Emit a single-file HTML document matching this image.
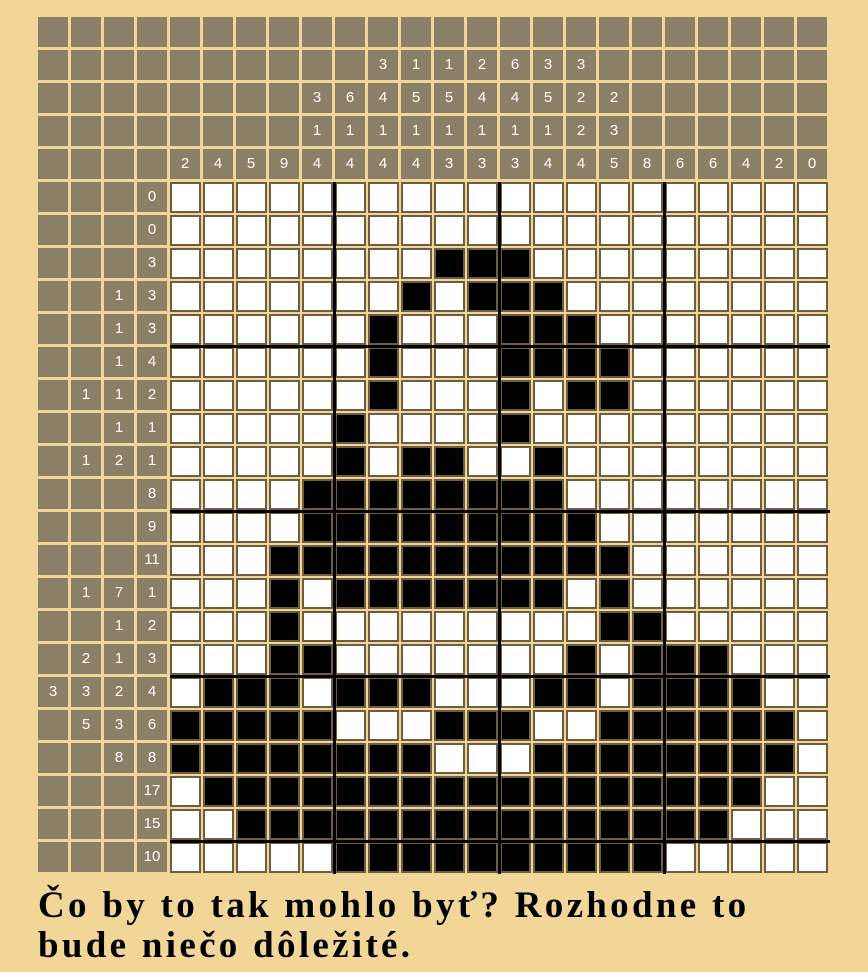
<!DOCTYPE html>
<html><head><meta charset="utf-8"><style>
html,body{margin:0;padding:0}
body{width:868px;height:972px;background:#f1d698;position:relative;overflow:hidden;font-family:"Liberation Sans",sans-serif}
#g{position:absolute;left:38px;top:17px;display:grid;grid-template-columns:repeat(24,33px);grid-auto-rows:33px}
#g s,#g i,#g b{display:block;text-decoration:none;font-style:normal;box-sizing:border-box}
#g s{width:30px;height:30px;background:#8c7f68;color:#fff;font-size:15px;line-height:30px;text-align:center}
#g i,#g b{width:31px;height:31px;border:2px solid #6e5d3f;background:#fff}
#g b{background:#000}
.v{position:absolute;top:182px;width:3px;height:692px;background:#000}
.h{position:absolute;left:170px;width:660px;height:3px;background:#000}
#t{position:absolute;left:38px;top:886px;font-family:"Liberation Serif",serif;font-weight:bold;font-size:37px;letter-spacing:3.3px;line-height:40px;color:#000;white-space:nowrap}
</style></head><body>
<div id="g">
<s></s><s></s><s></s><s></s><s></s><s></s><s></s><s></s><s></s><s></s><s></s><s></s><s></s><s></s><s></s><s></s><s></s><s></s><s></s><s></s><s></s><s></s><s></s><s></s>
<s></s><s></s><s></s><s></s><s></s><s></s><s></s><s></s><s></s><s></s><s>3</s><s>1</s><s>1</s><s>2</s><s>6</s><s>3</s><s>3</s><s></s><s></s><s></s><s></s><s></s><s></s><s></s>
<s></s><s></s><s></s><s></s><s></s><s></s><s></s><s></s><s>3</s><s>6</s><s>4</s><s>5</s><s>5</s><s>4</s><s>4</s><s>5</s><s>2</s><s>2</s><s></s><s></s><s></s><s></s><s></s><s></s>
<s></s><s></s><s></s><s></s><s></s><s></s><s></s><s></s><s>1</s><s>1</s><s>1</s><s>1</s><s>1</s><s>1</s><s>1</s><s>1</s><s>2</s><s>3</s><s></s><s></s><s></s><s></s><s></s><s></s>
<s></s><s></s><s></s><s></s><s>2</s><s>4</s><s>5</s><s>9</s><s>4</s><s>4</s><s>4</s><s>4</s><s>3</s><s>3</s><s>3</s><s>4</s><s>4</s><s>5</s><s>8</s><s>6</s><s>6</s><s>4</s><s>2</s><s>0</s>
<s></s><s></s><s></s><s>0</s><i></i><i></i><i></i><i></i><i></i><i></i><i></i><i></i><i></i><i></i><i></i><i></i><i></i><i></i><i></i><i></i><i></i><i></i><i></i><i></i>
<s></s><s></s><s></s><s>0</s><i></i><i></i><i></i><i></i><i></i><i></i><i></i><i></i><i></i><i></i><i></i><i></i><i></i><i></i><i></i><i></i><i></i><i></i><i></i><i></i>
<s></s><s></s><s></s><s>3</s><i></i><i></i><i></i><i></i><i></i><i></i><i></i><i></i><b></b><b></b><b></b><i></i><i></i><i></i><i></i><i></i><i></i><i></i><i></i><i></i>
<s></s><s></s><s>1</s><s>3</s><i></i><i></i><i></i><i></i><i></i><i></i><i></i><b></b><i></i><b></b><b></b><b></b><i></i><i></i><i></i><i></i><i></i><i></i><i></i><i></i>
<s></s><s></s><s>1</s><s>3</s><i></i><i></i><i></i><i></i><i></i><i></i><b></b><i></i><i></i><i></i><b></b><b></b><b></b><i></i><i></i><i></i><i></i><i></i><i></i><i></i>
<s></s><s></s><s>1</s><s>4</s><i></i><i></i><i></i><i></i><i></i><i></i><b></b><i></i><i></i><i></i><b></b><b></b><b></b><b></b><i></i><i></i><i></i><i></i><i></i><i></i>
<s></s><s>1</s><s>1</s><s>2</s><i></i><i></i><i></i><i></i><i></i><i></i><b></b><i></i><i></i><i></i><b></b><i></i><b></b><b></b><i></i><i></i><i></i><i></i><i></i><i></i>
<s></s><s></s><s>1</s><s>1</s><i></i><i></i><i></i><i></i><i></i><b></b><i></i><i></i><i></i><i></i><b></b><i></i><i></i><i></i><i></i><i></i><i></i><i></i><i></i><i></i>
<s></s><s>1</s><s>2</s><s>1</s><i></i><i></i><i></i><i></i><i></i><b></b><i></i><b></b><b></b><i></i><i></i><b></b><i></i><i></i><i></i><i></i><i></i><i></i><i></i><i></i>
<s></s><s></s><s></s><s>8</s><i></i><i></i><i></i><i></i><b></b><b></b><b></b><b></b><b></b><b></b><b></b><b></b><i></i><i></i><i></i><i></i><i></i><i></i><i></i><i></i>
<s></s><s></s><s></s><s>9</s><i></i><i></i><i></i><i></i><b></b><b></b><b></b><b></b><b></b><b></b><b></b><b></b><b></b><i></i><i></i><i></i><i></i><i></i><i></i><i></i>
<s></s><s></s><s></s><s>11</s><i></i><i></i><i></i><b></b><b></b><b></b><b></b><b></b><b></b><b></b><b></b><b></b><b></b><b></b><i></i><i></i><i></i><i></i><i></i><i></i>
<s></s><s>1</s><s>7</s><s>1</s><i></i><i></i><i></i><b></b><i></i><b></b><b></b><b></b><b></b><b></b><b></b><b></b><i></i><b></b><i></i><i></i><i></i><i></i><i></i><i></i>
<s></s><s></s><s>1</s><s>2</s><i></i><i></i><i></i><b></b><i></i><i></i><i></i><i></i><i></i><i></i><i></i><i></i><i></i><b></b><b></b><i></i><i></i><i></i><i></i><i></i>
<s></s><s>2</s><s>1</s><s>3</s><i></i><i></i><i></i><b></b><b></b><i></i><i></i><i></i><i></i><i></i><i></i><i></i><b></b><i></i><b></b><b></b><b></b><i></i><i></i><i></i>
<s>3</s><s>3</s><s>2</s><s>4</s><i></i><b></b><b></b><b></b><i></i><b></b><b></b><b></b><i></i><i></i><i></i><b></b><b></b><i></i><b></b><b></b><b></b><b></b><i></i><i></i>
<s></s><s>5</s><s>3</s><s>6</s><b></b><b></b><b></b><b></b><b></b><i></i><i></i><i></i><b></b><b></b><b></b><i></i><i></i><b></b><b></b><b></b><b></b><b></b><b></b><i></i>
<s></s><s></s><s>8</s><s>8</s><b></b><b></b><b></b><b></b><b></b><b></b><b></b><b></b><i></i><i></i><i></i><b></b><b></b><b></b><b></b><b></b><b></b><b></b><b></b><i></i>
<s></s><s></s><s></s><s>17</s><i></i><b></b><b></b><b></b><b></b><b></b><b></b><b></b><b></b><b></b><b></b><b></b><b></b><b></b><b></b><b></b><b></b><b></b><i></i><i></i>
<s></s><s></s><s></s><s>15</s><i></i><i></i><b></b><b></b><b></b><b></b><b></b><b></b><b></b><b></b><b></b><b></b><b></b><b></b><b></b><b></b><b></b><i></i><i></i><i></i>
<s></s><s></s><s></s><s>10</s><i></i><i></i><i></i><i></i><i></i><b></b><b></b><b></b><b></b><b></b><b></b><b></b><b></b><b></b><b></b><i></i><i></i><i></i><i></i><i></i>
</div>
<div class="v" style="left:333px"></div>
<div class="v" style="left:498px"></div>
<div class="v" style="left:663px"></div>
<div class="h" style="top:345px"></div>
<div class="h" style="top:510px"></div>
<div class="h" style="top:675px"></div>
<div class="h" style="top:840px"></div>
<div id="t">Čo by to tak mohlo byť? Rozhodne to<br>bude niečo dôležité.</div>
</body></html>
